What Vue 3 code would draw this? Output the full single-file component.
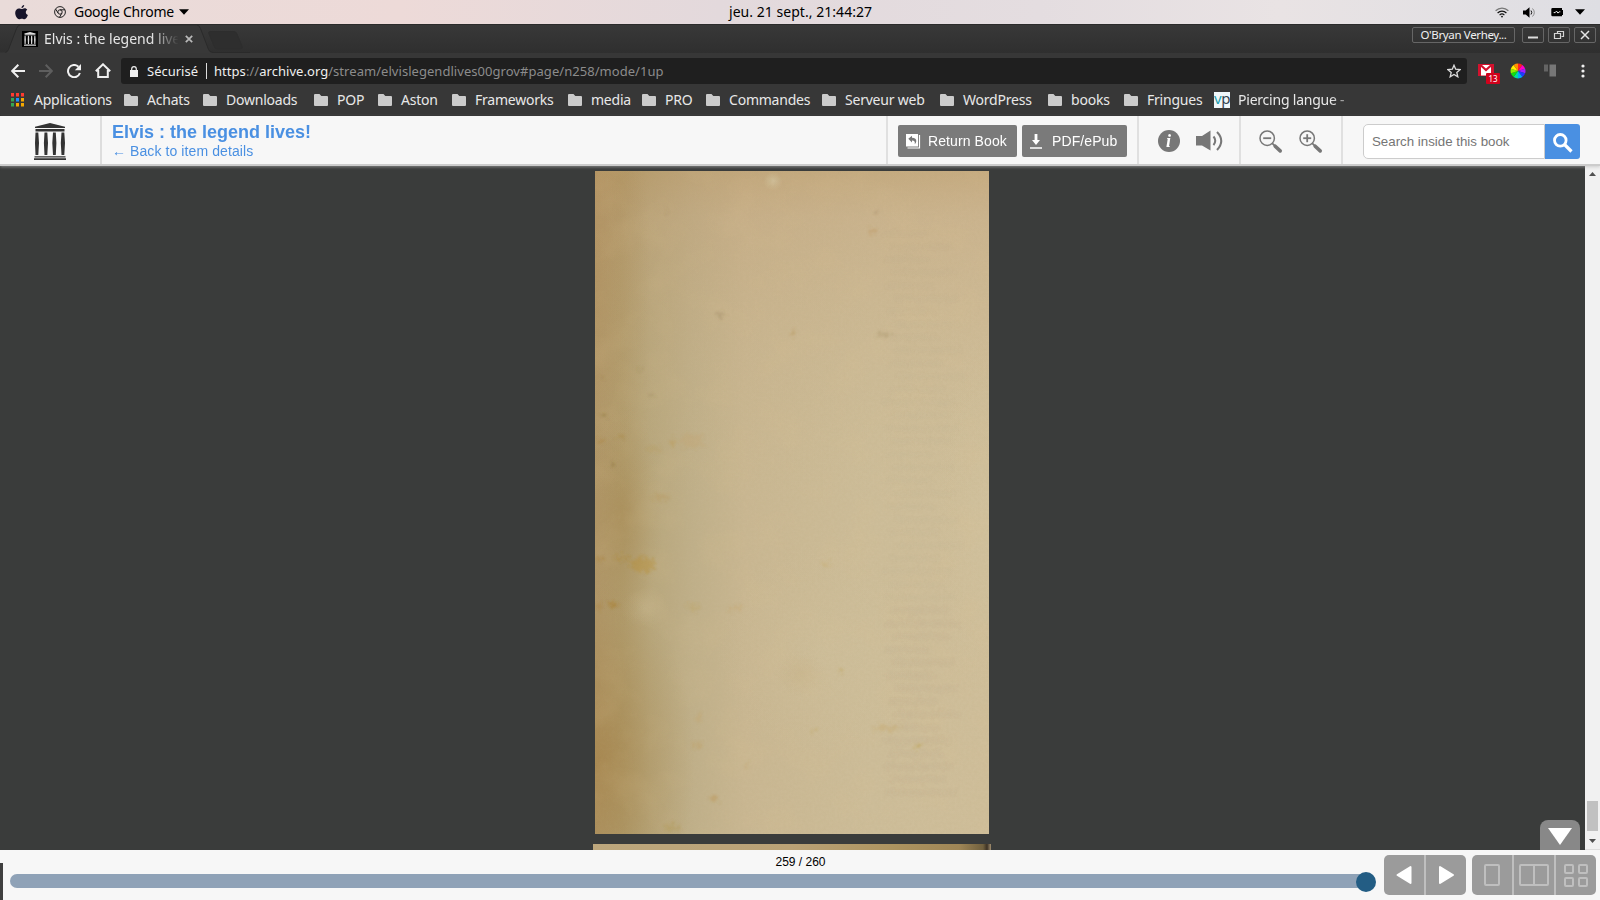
<script setup>
const bookmarks = [
  { label: 'Achats', w: 43 },
  { label: 'Downloads', w: 75 },
  { label: 'POP', w: 28 },
  { label: 'Aston', w: 38 },
  { label: 'Frameworks', w: 80 },
  { label: 'media', w: 38 },
  { label: 'PRO', w: 28 },
  { label: 'Commandes', w: 80 },
  { label: 'Serveur web', w: 82 },
  { label: 'WordPress', w: 72 },
  { label: 'books', w: 40 },
  { label: 'Fringues', w: 54 },
]
const appColors = ['#ff3b30', '#ff3b30', '#ff3b30', '#34a853', '#1a90ff', '#f5a800', '#34a853', '#f5a800', '#f5a800']
const wheel = ['#ff2020', '#ff00c8', '#a020ff', '#2038ff', '#00a8ff', '#00e0a0', '#10e010', '#90f000', '#fff000', '#ff9000']
const slice = (i) => {
  const a = (i * 36 - 90) * Math.PI / 180
  const b = ((i + 1) * 36 - 90) * Math.PI / 180
  return `M8 8L${8 + 7.5 * Math.cos(a)} ${8 + 7.5 * Math.sin(a)}A7.5 7.5 0 0 1 ${8 + 7.5 * Math.cos(b)} ${8 + 7.5 * Math.sin(b)}Z`
}

// foxing marks on the paper: x, y, rx, ry, colour, opacity
const spots = [
  [48, 394, 12, 8, '#b68b32', 0.4], [27, 387, 8, 2, '#b0842c', 0.45], [18, 434, 4, 3, '#a97c28', 0.5],
  [97, 270, 12, 7, '#c79a58', 0.18], [77, 272, 4, 3, '#bd9140', 0.3], [60, 278, 8, 3, '#b9954a', 0.2],
  [66, 326, 9, 3, '#b8914a', 0.25], [98, 436, 6, 4, '#bd9a48', 0.2], [125, 144, 4, 3, '#8d7a55', 0.3],
  [198, 162, 3, 2, '#b58e50', 0.35], [277, 60, 3, 2, '#bb8c50', 0.35], [281, 41, 1.5, 1.5, '#8d7350', 0.3],
  [323, 575, 4, 2, '#b8983e', 0.45], [292, 557, 14, 3, '#c3a055', 0.25], [246, 500, 2, 2, '#b8983e', 0.35],
  [218, 560, 2, 2, '#b8983e', 0.35], [103, 574, 4, 4, '#c0984a', 0.25], [119, 628, 4, 3, '#b9893a', 0.3],
  [152, 594, 2, 3, '#b9893a', 0.2], [77, 657, 7, 5, '#b19648', 0.3], [231, 394, 4, 3, '#c8a85a', 0.25],
  [8, 244, 2, 2, '#8a713a', 0.4], [7, 207, 2, 2, '#8a713a', 0.3], [56, 225, 2, 2, '#927d4a', 0.25],
  [44, 198, 2, 2, '#927d4a', 0.3], [18, 293, 1.5, 1.5, '#7d6330', 0.3], [72, 41, 2, 1.5, '#8b744a', 0.3],
  [139, 46, 1, 1, '#7d6340', 0.35], [5, 387, 4, 2, '#a8782c', 0.35], [4, 435, 3, 3, '#a8782c', 0.3],
  [26, 267, 4, 2, '#a8843c', 0.3], [6, 269, 4, 3, '#a8803c', 0.35], [141, 437, 8, 2, '#c7a05a', 0.25],
  [104, 547, 3, 5, '#c79a5a', 0.2], [290, 164, 9, 3, '#a48e68', 0.35],
]
const ghosts = Array.from({ length: 44 }, (_, i) => ({
  x: 288 + (i * 7) % 13, y: 60 + i * 13, w: 44 + (i * 17) % 32, o: 0.02 + (i > 28 ? 0.02 : 0),
}))
</script>

<template>
  <div class="screen">
    <header class="menubar">
      <div class="mb-left">
        <svg class="apple" width="13" height="15" viewBox="0 0 13 15"><path fill="#17142a" d="M9.2 0c.1 1.4-1.200 3.100-2.700 3.200C6.300 1.700 7.800.2 9.200 0zM6.700 4.100c.7 0 1.500-.8 2.900-.8 1.200 0 2.200.7 2.700 1.500-2.200 1.300-1.900 4.300.6 5.200-.5 1.600-1.900 4.200-3.400 4.300-1 0-1.500-.6-2.700-.6s-1.700.6-2.700.6C2.300 14.300.2 10.800.2 8.100c0-3 1.900-4.600 3.800-4.600 1.200 0 2 .6 2.700.6z"/></svg>
        <svg class="chrome" width="12" height="12" viewBox="0 0 12 12" fill="none" stroke="#222"><circle cx="6" cy="6" r="5.400"/><circle cx="6" cy="6" r="2.200"/><path d="M6 3.800h5M4.100 7.100L1.600 3M7.900 7.100L5.500 11.300"/></svg>
        <span class="mb-app">Google Chrome</span>
        <svg width="10" height="6" viewBox="0 0 10 6"><path d="M0 .3h10L5 5.800z"/></svg>
      </div>
      <div class="mb-clock">jeu. 21 sept., 21:44:27</div>
      <div class="mb-right">
        <svg class="wifi" width="14" height="11" viewBox="0 0 14 11" fill="none" stroke="#111" stroke-width="1.200"><path d="M.6 3.800C4.300.2 9.700.2 13.400 3.800" stroke="#777"/><path d="M2.600 6c2.500-2.400 6.300-2.400 8.800 0M4.600 8.100c1.400-1.300 3.400-1.300 4.800 0"/><circle cx="7" cy="9.600" r=".9" fill="#111" stroke="none"/></svg>
        <svg class="vol" width="13" height="11" viewBox="0 0 13 11"><path d="M0 3.500h2.700L6.500.2v10.600L2.700 7.500H0z"/><path d="M8 3.500q1.500 2 0 4" fill="none" stroke="#111"/><path d="M9.500 1.500q3.600 4 0 8" fill="none" stroke="#888"/></svg>
        <svg class="bat" width="13" height="10" viewBox="0 0 13 10"><path d="M1.500 1H11v2h1v5h-1v1.200H1.500Q.3 9.200.3 8V2.200Q.3 1 1.500 1z"/><path d="M2.700 5.600h1.500l1.300-1.500 1.500 2 1.300-1.300h1" fill="none" stroke="#eee"/></svg>
        <svg class="caret" width="10" height="6" viewBox="0 0 10 6"><path d="M0 .3h10L5 5.800z"/></svg>
      </div>
    </header>

    <div class="tabstrip">
      <svg class="tabshape" width="250" height="29" viewBox="0 0 250 29">
        <path d="M0 28.500H5.500Q7.500 28 8.500 25.500L16.500 4.500Q18 .8 20.500.8H196.500Q199 .8 200.500 4.500L208.500 25.500Q209.500 28.500 213 28.500V29H0z" fill="#383838"/>
        <path d="M5.500 28.500Q7.500 28 8.500 25.500L16.500 4.500Q18 .8 20.500.8H196.500Q199 .8 200.500 4.500L208.500 25.500Q209.500 28.500 213 28.500H250" fill="none" stroke="#2a2a2a"/>
        <path d="M210 7.500H234Q236 7.500 237 10L242 22Q243 25 240 25H218Q215 25 214 22L209 10Q208 7.500 210 7.500z" fill="#2e2e2e" stroke="#2d2d2d"/>
      </svg>
      <span class="favicon"><svg width="12" height="14" viewBox="0 0 32 37"><use href="#temple"/></svg></span>
      <span class="tabtitle">Elvis : the legend live</span>
      <svg class="tabclose" width="8" height="8" viewBox="0 0 8 8"><path d="M.8.8l6.400 6.400M7.200.8L.8 7.200" stroke="#b9b9b9" stroke-width="1.700"/></svg>
      <div class="wincontrols">
        <span class="user">O'Bryan Verhey...</span>
        <span class="wbtn"><svg width="20" height="14"><path d="M5 9.500h10" stroke="#ddd" stroke-width="2"/></svg></span>
        <span class="wbtn"><svg width="20" height="14" fill="none" stroke="#d4d4d4" stroke-width="1.200"><path d="M8.500 5.500v-2h6v5h-2"/><path d="M5.500 5.500h6v5h-6z"/></svg></span>
        <span class="wbtn"><svg width="20" height="14"><path d="M6 3l8 8M14 3l-8 8" stroke="#e4e4e4" stroke-width="1.500"/></svg></span>
      </div>
    </div>

    <div class="toolbar">
      <div class="nav">
        <svg width="14" height="14" viewBox="0 0 14 14" fill="none" stroke="#f0f0f0" stroke-width="2"><path d="M14 7H1.500M7.300.8L1.200 7l6.100 6.200"/></svg>
        <svg width="14" height="14" viewBox="0 0 14 14" fill="none" stroke="#5e5e5e" stroke-width="2"><path d="M0 7h12.500M6.700.8L12.800 7l-6.100 6.200"/></svg>
        <svg width="14" height="14" viewBox="0 0 14 14"><path d="M12.900 9A6.100 6.100 0 1 1 11.400 2.700" fill="none" stroke="#f0f0f0" stroke-width="2"/><path d="M14 0v6.200H7.800z" fill="#f0f0f0"/></svg>
        <svg width="16" height="15" viewBox="0 0 16 15" fill="none" stroke="#f0f0f0" stroke-width="2"><path d="M.8 8.300L8 1.300l7.200 7M3.200 7v7h9.600V7"/></svg>
      </div>
      <div class="omnibox">
        <svg class="lock" width="8" height="11" viewBox="0 0 8 11"><path d="M0 4h8v7H0z" fill="#efefef"/><path d="M1.700 4.500V3a2.300 2.300 0 0 1 4.600 0v1.500" fill="none" stroke="#efefef" stroke-width="1.200"/></svg>
        <span class="secure">Sécurisé</span><i class="osep"></i>
        <span class="url"><b>https</b>://<b>archive.org</b>/stream/elvislegendlives00grov#page/n258/mode/1up</span>
        <svg class="star" width="14" height="14" viewBox="0 0 14 14"><path d="M7 1.200l1.700 4 4.400.4-3.300 2.900 1 4.300L7 10.500l-3.800 2.300 1-4.300L.9 5.600l4.400-.4z" fill="none" stroke="#ddd" stroke-width="1.300"/></svg>
      </div>
      <div class="exts">
        <div class="gmail">
          <svg width="16" height="13" viewBox="0 0 16 13"><path d="M0 0h16v12H0z" fill="#d3122e"/><path d="M3 1h10v10.500H3z" fill="#fff"/><path d="M2.500 1l5.500 5 5.500-5" fill="none" stroke="#d3122e" stroke-width="2.200"/></svg>
          <span class="badge">13</span>
        </div>
        <svg class="wheel" width="16" height="16" viewBox="0 0 16 16"><path v-for="(c, i) in wheel" :key="i" :d="slice(i)" :fill="c"/></svg>
        <svg class="bars" width="13" height="13" viewBox="0 0 13 13"><path d="M0 .5h4v7H0z" fill="#646464"/><path d="M5.500.5h6.500v12H5.500z" fill="#777"/></svg>
        <svg class="dots" width="4" height="14" viewBox="0 0 4 14" fill="#f0f0f0"><circle cx="2" cy="2" r="1.600"/><circle cx="2" cy="7" r="1.600"/><circle cx="2" cy="12" r="1.600"/></svg>
      </div>
    </div>

    <nav class="bookmarks">
      <svg class="apps" width="13" height="14" viewBox="0 0 13 14"><rect v-for="(c, i) in appColors" :key="i" :x="(i % 3) * 5" :y="Math.floor(i / 3) * 5" width="3" height="3.500" :fill="c"/></svg>
      <span class="bm-text apps-text">Applications</span>
      <div v-for="b in bookmarks" :key="b.label" class="bm">
        <svg width="14" height="12" viewBox="0 0 14 12"><path d="M1 0h4.500L7.300 2H13q1 0 1 1v8q0 1-1 1H1q-1 0-1-1V1q0-1 1-1z" fill="#cbcbcb"/></svg>
        <span class="bm-text" :style="{ width: b.w + 'px' }">{{ b.label }}</span>
      </div>
      <span class="vp"><em>v</em>p</span>
      <span class="bm-text faded">Piercing langue -</span>
    </nav>

    <section class="bookbar">
      <svg class="logo" width="32" height="37" viewBox="0 0 32 37">
        <g id="temple">
          <path d="M16 0L31 3.800V5H1V3.800zM1.500 6h29v2.500h-29z"/><path d="M.5 33.300h31v1.200H.5zM0 35.300h32V37H0z"/>
          <path d="M1.500 9.500h2.800L5 20l-.7 12H1.500L1 20zM10.500 9.500h2.800L14 20l-.7 12h-2.800l-.6-12zM19 9.500h2.800l.6 10.500-.6 12H19l-.7-12zM27.500 9.500h2.800l.7 10.500-.7 12h-2.800l-.7-12z"/>
        </g>
      </svg>
      <div class="titles">
        <div class="title">Elvis : the legend lives!</div>
        <div class="back">← Back to item details</div>
      </div>
      <div class="actions">
        <button class="act return"><svg width="15" height="16" viewBox="0 0 15 16"><path d="M0 1h12v12.500H0z" fill="#fff"/><path d="M13.500 2v13H1.500" fill="none" stroke="#fff" stroke-width="1.200"/><path d="M2.300 5.700L6 2.700v2q4.500 0 4.300 3.500-.2 2.200-1.600 3 .9-3.900-2.700-3.800v2z" fill="#777"/></svg><span>Return Book</span></button>
        <button class="act pdf"><svg width="12" height="15" viewBox="0 0 12 15"><path d="M4.600 0h2.800v6H10L6 11 2 6h2.600zM0 13.200h12v1.500H0z" fill="#fff"/></svg><span>PDF/ePub</span></button>
      </div>
      <div class="tools info">
        <svg width="22" height="22" viewBox="0 0 22 22"><circle cx="11" cy="11" r="11" fill="#777"/><text x="8" y="17" class="itext">i</text></svg>
        <svg width="28" height="22" viewBox="0 0 28 22"><path d="M0 6h6l8.500-5.500v20L6 15.500H0z" fill="#777"/><path d="M17.500 6.500q3.500 4.300 0 8.600M21 2q8.500 8.800 0 18" fill="none" stroke="#777" stroke-width="2"/></svg>
      </div>
      <div class="tools zoomers">
        <svg v-for="n in 2" :key="n" width="24" height="24" viewBox="0 0 24 24" fill="none" stroke="#777"><circle cx="8.200" cy="8.200" r="7.200" stroke-width="1.500"/><path d="M4.200 8.200h8" stroke-width="1.800"/><path v-if="n === 2" d="M8.200 4.200v8" stroke-width="1.800"/><path d="M13.300 13.300l3 3" stroke-width="1.800"/><path d="M16.200 16.200l5 4.700" stroke-width="3.600" stroke-linecap="round"/></svg>
      </div>
      <div class="search">
        <div class="field">Search inside this book</div>
        <div class="go"><svg width="20" height="20" viewBox="0 0 20 20" fill="none" stroke="#fff"><circle cx="7.300" cy="7.300" r="5.800" stroke-width="2.800"/><path d="M11.500 11.500l7 7" stroke-width="3.200"/></svg></div>
      </div>
    </section>

    <main class="viewer">
      <div class="canvas">
        <svg class="page" width="394" height="663" viewBox="0 0 394 663">
          <defs>
            <linearGradient id="base" x1="0" y1="0" x2="1" y2="0">
              <stop offset="0" stop-color="#b09668"/><stop offset=".07" stop-color="#b09b6c"/><stop offset=".14" stop-color="#b8a77d"/><stop offset=".25" stop-color="#c0b08a"/><stop offset=".38" stop-color="#c9b792"/><stop offset=".7" stop-color="#cdbd99"/><stop offset="1" stop-color="#cfbe9a"/>
            </linearGradient>
            <linearGradient id="topTint" x1="0" y1="0" x2="0" y2="1">
              <stop offset="0" stop-color="#b8915e" stop-opacity=".42"/><stop offset=".07" stop-color="#c19a70" stop-opacity=".28"/><stop offset=".3" stop-color="#c6a980" stop-opacity=".12"/><stop offset=".5" stop-color="#ccb888" stop-opacity="0"/>
            </linearGradient>
            <radialGradient id="lo"><stop offset="0" stop-color="#a17d40" stop-opacity=".55"/><stop offset="1" stop-color="#a98a50" stop-opacity="0"/></radialGradient>
            <radialGradient id="hi"><stop offset="0" stop-color="#d4c7a4" stop-opacity=".65"/><stop offset="1" stop-color="#d2c39c" stop-opacity="0"/></radialGradient>
            <filter id="grain" x="0" y="0" width="100%" height="100%"><feTurbulence type="fractalNoise" baseFrequency=".35" numOctaves="3" seed="6"/><feColorMatrix values="0 0 0 0 .5  0 0 0 0 .4  0 0 0 0 .2  .7 0 0 0 -.25"/></filter>
            <filter id="mottle" x="0" y="0" width="100%" height="100%"><feTurbulence type="fractalNoise" baseFrequency=".025" numOctaves="3" seed="11"/><feColorMatrix values="0 0 0 0 .72  0 0 0 0 .55  0 0 0 0 .3  1.400 0 0 0 -.62"/></filter>
            <filter id="blot" x="-5%" y="-5%" width="110%" height="110%"><feTurbulence type="fractalNoise" baseFrequency=".3" numOctaves="2" seed="3" result="n"/><feDisplacementMap in="SourceGraphic" in2="n" scale="14" xChannelSelector="R" yChannelSelector="G"/><feGaussianBlur stdDeviation=".9"/></filter>
          </defs>
          <rect width="394" height="663" fill="url(#base)"/>
          <rect width="394" height="663" fill="url(#topTint)"/>
          <ellipse cx="5" cy="590" rx="95" ry="180" fill="url(#lo)"/>
          <ellipse cx="28" cy="345" rx="40" ry="110" fill="url(#lo)" opacity=".6"/>
          <ellipse cx="0" cy="100" rx="55" ry="220" fill="url(#lo)" opacity=".3"/>
          <ellipse cx="50" cy="437" rx="24" ry="20" fill="url(#hi)" opacity=".35"/>
          <ellipse cx="178" cy="10" rx="10" ry="9" fill="url(#hi)"/>
          <ellipse cx="230" cy="480" rx="110" ry="110" fill="url(#hi)" opacity=".35"/>
          <ellipse cx="390" cy="350" rx="50" ry="190" fill="url(#hi)" opacity=".5"/>
          <ellipse cx="205" cy="503" rx="25" ry="22" fill="url(#lo)" opacity=".15"/>
          <rect width="394" height="663" filter="url(#mottle)" opacity=".2"/>
          <g filter="url(#blot)">
            <ellipse v-for="(s, i) in spots" :key="i" :cx="s[0]" :cy="s[1]" :rx="s[2]" :ry="s[3]" :fill="s[4]" :opacity="s[5]"/>
            <rect v-for="(g, i) in ghosts" :key="'g' + i" :x="g.x" :y="g.y" :width="g.w" height="5" fill="#7c7050" :opacity="g.o"/>
          </g>
          <rect width="394" height="663" filter="url(#grain)" opacity=".25"/>
        </svg>
        <div class="nextpage"></div>
        <div class="collapse"><svg width="24" height="17" viewBox="0 0 24 17"><path d="M0 0h24L12 17z" fill="#fff"/></svg></div>
      </div>
      <div class="scrollbar">
        <svg width="7" height="4"><path d="M0 4L3.500 0 7 4z" fill="#505050"/></svg>
        <div class="thumb"></div>
        <svg width="7" height="4"><path d="M0 0h7L3.500 4z" fill="#505050"/></svg>
      </div>
    </main>

    <footer class="footer">
      <div class="count">259 / 260</div>
      <div class="track"><span class="knob"></span></div>
      <div class="group flip">
        <span><svg width="16" height="20" viewBox="0 0 16 20"><path d="M1.500 10L14.500 2v16z" fill="#fff" stroke="#fff" stroke-width="2" stroke-linejoin="round"/></svg></span>
        <span><svg width="16" height="20" viewBox="0 0 16 20"><path d="M15 10L2 2v16z" fill="#fff" stroke="#fff" stroke-width="2" stroke-linejoin="round"/></svg></span>
      </div>
      <div class="group modes">
        <span><svg width="16" height="22"><rect x="1" y="1" width="14" height="20" rx="1"/></svg></span>
        <span><svg width="30" height="22"><rect x="1" y="1" width="28" height="20" rx="1"/><path d="M15 1v20"/></svg></span>
        <span><svg width="24" height="23"><rect x="1" y="1" width="8" height="8" rx="1"/><rect x="15" y="1" width="8" height="8" rx="1"/><rect x="1" y="14" width="8" height="8" rx="1"/><rect x="15" y="14" width="8" height="8" rx="1"/></svg></span>
      </div>
      <i class="edge"></i>
    </footer>
  </div>
</template>

<style>
body { margin: 0; overflow: hidden; }
</style>

<style scoped>
* { box-sizing: border-box; }
.screen { width: 1600px; height: 900px; display: flex; flex-direction: column; font: 14px "Noto Sans", "Open Sans", sans-serif; background: #3a3c3b; overflow: hidden; }
svg { display: block; flex: none; }
.menubar { height: 24px; flex: none; display: grid; grid-template-columns: 1fr auto 1fr; align-items: center; background: linear-gradient(90deg, #e9dbd9, #eddad8 25%, #e3d9dc 45%, #e4dde0 65%, #e9e3e4 80%, #dedee3); color: #000; }
.mb-left { display: flex; align-items: center; padding-left: 15px; }
.chrome { margin-left: 26px; }
.mb-app { width: 100px; margin: 0 5px 0 8px; white-space: nowrap; letter-spacing: -.27px; line-height: 22px; padding-bottom: 1px; }
.mb-clock { width: 144px; white-space: nowrap; line-height: 24px; padding-left: 1px; letter-spacing: .04px; }
.mb-right { display: flex; justify-content: flex-end; align-items: center; padding-right: 15px; }
.vol { margin-left: 14px; margin-right: -1px; }
.bat { margin-left: 15px; margin-right: -1px; }
.caret { margin-left: 13px; }
.bat { position: relative; left: 1px; }
.tabstrip { height: 29px; flex: none; position: relative; display: flex; align-items: center; padding-left: 22px; background: linear-gradient(#383838, #2f2f2f); border-top: 1px solid #2b2b2b; }
.tabshape { position: absolute; left: 0; top: -1px; }
.favicon { position: relative; width: 16px; height: 16px; background: #000; fill: #ddd; display: grid; place-items: center; }
.tabtitle { position: relative; margin-left: 6px; width: 136px; line-height: 20px; padding-bottom: 0; white-space: nowrap; color: #e6e6e6; -webkit-mask-image: linear-gradient(90deg, #000 79%, transparent 99%); mask-image: linear-gradient(90deg, #000 79%, transparent 99%); }
.tabclose { position: relative; margin-left: 5px; }
.wincontrols { margin-left: auto; padding-right: 4px; display: flex; gap: 4px; align-self: flex-start; padding-top: 2px; }
.user { width: 103px; height: 16px; border: 1px solid #666; border-radius: 2px; color: #f0f0f0; font-size: 11.500px; letter-spacing: -.35px; line-height: 14px; text-align: center; white-space: nowrap; margin-right: 3px; }
.wbtn { width: 22px; height: 16px; border: 1px solid #666; border-radius: 2px; }
.toolbar { height: 34px; flex: none; background: #373737; display: flex; align-items: center; padding-left: 11px; padding-top: 1px; }
.nav { display: flex; align-items: center; gap: 14px; width: 110px; }
.omnibox { flex: 0 0 1346px; height: 26px; margin-top: 1px; background: #1f1f1f; border-radius: 3px; display: flex; align-items: center; padding: 0 6px 0 9px; font-size: 13px; white-space: nowrap; }
.secure { color: #efefef; width: 50px; margin-left: 9px; line-height: 18px; padding-bottom: 1px; }
.osep { width: 1px; height: 16px; background: #ddd; margin: 0 7px 0 9px; }
.url { color: #8c8c8c; line-height: 18px; padding-bottom: 1px; letter-spacing: .045px; }
.url b { font-weight: 400; color: #efefef; }
.star { margin-left: auto; }
.exts { display: flex; align-items: center; padding-left: 11px; }
.gmail { position: relative; width: 16px; }
.badge { position: absolute; left: 8px; top: 9px; width: 14px; height: 11px; background: #d1021c; color: #fff; font-size: 8px; line-height: 11px; text-align: center; border-radius: 1px; }
.wheel { margin-left: 16px; }
.bars { margin-left: 18px; }
.dots { margin-left: 24px; }
.bookmarks { height: 29px; flex: none; background: #373737; border-bottom: 1px solid #2b2b2b; display: flex; align-items: center; padding-left: 11px; padding-bottom: 3px; }
.bm-text { color: #e8e8e8; white-space: nowrap; flex: none; letter-spacing: -.22px; line-height: 20px; padding-top: 1px; }
.apps-text { margin-left: 10px; width: 77px; }
.bm { display: flex; align-items: center; margin-left: 13px; gap: 9px; }
.bm svg { margin-top: 1px; }
.vp { width: 16px; height: 16px; margin: 0 8px 0 13px; background: #f0f7fa; color: #354450; font: 15px/13px "Noto Sans", sans-serif; text-align: center; letter-spacing: -.5px; }
.vp em { font-style: normal; color: #1d9faf; }
.faded { width: 113px; -webkit-mask-image: linear-gradient(90deg, #000 82%, transparent 108%); mask-image: linear-gradient(90deg, #000 82%, transparent 108%); }
.bookbar { height: 50px; flex: none; background: #f7f7f7; border-bottom: 2px solid #ccc; display: flex; font-family: "Liberation Sans", Arial, sans-serif; position: relative; box-shadow: 0 1px 3px rgba(180,180,180,.6); z-index: 1; }
.logo { margin: 7px 34px 0; fill: #333; }
.titles { width: 786px; border-left: 2px solid #ddd; padding: 6px 0 0 10px; color: #4a90e2; }
.title { font-size: 18px; font-weight: 700; line-height: 21px; white-space: nowrap; }
.back { font-size: 14px; line-height: 17px; letter-spacing: .09px; }
.actions { border-left: 2px solid #e0e0e0; width: 251px; padding: 9px 0 0 10px; display: flex; gap: 5px; }
.act { height: 32px; border: 0; border-radius: 2px; background: #7a7a7a; color: #fff; font: 14px "Liberation Sans", Arial, sans-serif; display: flex; align-items: center; padding: 0 0 0 8px; letter-spacing: .1px; }
.return { width: 119px; }
.return span { margin-left: 7px; white-space: nowrap; }
.pdf { width: 105px; }
.pdf span { margin-left: 10px; }
.tools { display: flex; border-left: 2px solid #e0e0e0; padding-left: 19px; }
.info { width: 102px; padding-top: 14px; gap: 16px; }
.zoomers { width: 102px; padding: 14px 0 0 18px; gap: 16px; }
.itext { font: italic bold 18px "Liberation Serif", serif; fill: #fff; }
.search { border-left: 2px solid #e0e0e0; flex: 1; padding: 8px 0 0 20px; display: flex; }
.field { width: 182px; height: 35px; border: 1px solid #ccc; border-radius: 5px 0 0 5px; background: #fff; color: #757575; font-size: 13.300px; line-height: 34px; padding-left: 8px; white-space: nowrap; }
.go { width: 35px; height: 35px; background: #4a90e2; border-radius: 0 3px 3px 0; padding: 9px 8px; }
.viewer { height: 684px; flex: none; display: flex; background: #3a3c3b; }
.canvas { width: 1585px; position: relative; padding-top: 5px; overflow: hidden; display: flex; flex-direction: column; align-items: center; gap: 10px; }
.page { margin-right: 1px; }
.nextpage { width: 398px; height: 10px; flex: none; margin-right: 1px; background: linear-gradient(90deg, #bda77d, #baa276 50%, #ad9460 75%, #9f8656 92%, #70603e 98%, #3c3225 99%, #a49070); }
.collapse { position: absolute; right: 5px; bottom: 0; width: 40px; height: 30px; background: #888; border-radius: 8px 8px 0 0; padding: 8px; }
.scrollbar { width: 15px; background: #f1f1f1; padding: 6px 2px; display: flex; flex-direction: column; align-items: center; border-bottom: 1px solid #ddd; }
.thumb { width: 11px; height: 30px; background: #c1c1c1; margin-top: auto; margin-bottom: 8px; }
.footer { height: 50px; flex: none; background: #f7f7f7; position: relative; display: flex; font-family: "Liberation Sans", Arial, sans-serif; }
.count { position: absolute; left: 1px; right: 0; top: 4px; text-align: center; font-size: 12px; line-height: 16px; color: #000; }
.track { position: relative; width: 1356px; height: 14px; margin: 24px 18px 0 10px; background: #8fa2b7; border-radius: 7px; }
.knob { position: absolute; right: -10px; top: -2px; width: 20px; height: 20px; border-radius: 50%; background: #235d84; }
.group { height: 40px; margin-top: 5px; display: flex; background: #9b9b9b; border-radius: 5px; overflow: hidden; }
.group span { display: grid; place-items: center; }
.group span + span { border-left: 2px solid #bfbfbf; }
.flip { width: 82px; }
.flip span { flex: 1; }
.modes { width: 124px; margin-left: 6px; fill: none; stroke: #bfbfbf; stroke-width: 2; }
.modes span { flex: 1; }
.edge { position: absolute; left: 0; top: 13px; width: 3px; height: 37px; background: #3f3f3f; }
</style>
